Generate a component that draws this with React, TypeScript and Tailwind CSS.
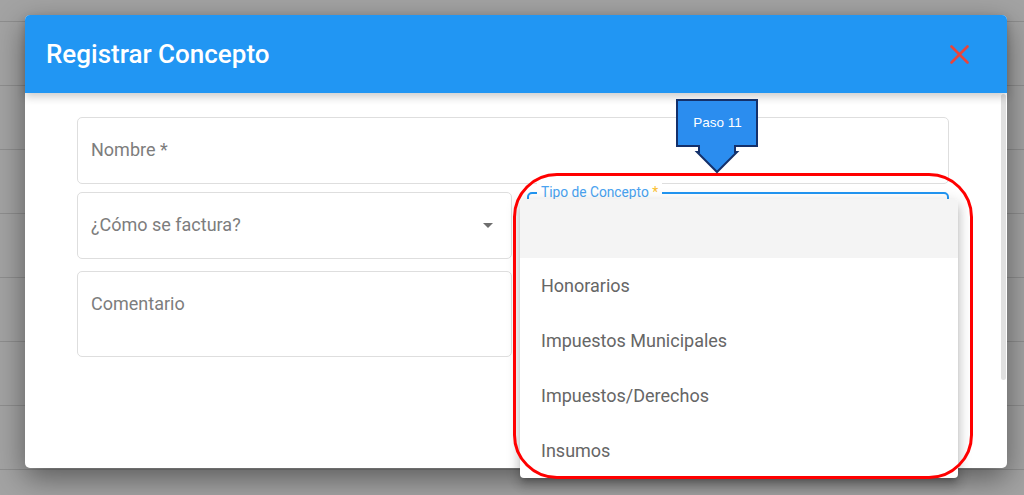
import React from "react";

const bgRows = [0, 1, 2, 3, 4, 5, 6, 7];
const options = ["Honorarios", "Impuestos Municipales", "Impuestos/Derechos", "Insumos"];

export default function App() {
  return (
    <div className="relative w-[1024px] h-[495px] overflow-hidden bg-[#a3a3a3] font-[Roboto,sans-serif]">
      {/* table rows behind the overlay */}
      <div className="flex flex-col">
        <div className="h-[22px] border-b border-[#8e8e8e]" />
        {bgRows.map((r) => (
          <div key={r} className="h-[64px] border-b border-[#8e8e8e]" />
        ))}
      </div>

      {/* modal */}
      <div className="absolute left-[25px] top-[15px] w-[982px] h-[453px] bg-white rounded-[5px] shadow-[0_10px_30px_rgba(0,0,0,0.45)] flex flex-col">
        <div className="relative z-10 h-[78px] shrink-0 bg-[#2196f3] rounded-t-[5px] flex items-center justify-between pl-[21px] pr-[38px] shadow-[0_4px_8px_rgba(0,0,0,0.2)]">
          <span className="text-white text-[26px] font-medium">Registrar Concepto</span>
          <svg width="19" height="19" viewBox="0 0 19 19">
            <line x1="1.5" y1="1.5" x2="17.5" y2="17.5" stroke="#e8453c" strokeWidth="2.6" strokeLinecap="round" />
            <line x1="17.5" y1="1.5" x2="1.5" y2="17.5" stroke="#e8453c" strokeWidth="2.6" strokeLinecap="round" />
          </svg>
        </div>

        <div className="relative flex-1 pl-[52px] pr-[58px] pt-[24px] flex flex-col">
          <div className="h-[67px] border border-[#dedede] rounded-[5px] pl-[13px] pt-[20px] text-[18px] leading-[24px] text-[#7d7d7d]">
            Nombre *
          </div>

          <div className="mt-[8px] flex gap-[15px]">
            <div className="w-[435px] h-[67px] border border-[#dedede] rounded-[5px] pl-[13px] pr-[18px] pt-[20px] flex justify-between text-[18px] leading-[24px] text-[#7d7d7d]">
              <span>¿Cómo se factura?</span>
              <svg width="10" height="5" viewBox="0 0 10 5" className="mt-[10px]">
                <path d="M0 0 L10 0 L5 5 Z" fill="#6e6e6e" />
              </svg>
            </div>
            <div className="relative flex-1 h-[67px] border-2 border-[#2196f3] rounded-[5px]">
              <span className="absolute left-[8px] top-[-11px] px-[4px] bg-white text-[13.75px] leading-[18px] text-[#4aa3f0] whitespace-nowrap">
                Tipo de Concepto<span className="text-[#fbc02d]"> *</span>
              </span>
              <div className="absolute left-[-9px] top-[5px] z-20 w-[438px] h-[279px] bg-white rounded-[4px] shadow-[0_5px_5px_-3px_rgba(0,0,0,0.2),0_8px_10px_1px_rgba(0,0,0,0.14),0_3px_14px_2px_rgba(0,0,0,0.12)] flex flex-col">
                <div className="h-[59px] bg-[#f4f4f4] rounded-t-[4px]" />
                {options.map((o) => (
                  <div key={o} className="h-[55px] flex items-center pl-[21px] text-[18px] text-[#666666]">
                    {o}
                  </div>
                ))}
              </div>
            </div>
          </div>

          <div className="mt-[12px] w-[435px] h-[86px] border border-[#dedede] rounded-[5px] pl-[13px] pt-[20px] text-[18px] leading-[24px] text-[#7d7d7d]">
            Comentario
          </div>
        </div>

        {/* scrollbar thumb */}
        <div className="absolute right-[1px] top-[79px] w-[5px] h-[286px] rounded-full bg-[#e0e0e0]" />
      </div>

      {/* red highlight */}
      <div className="absolute left-[513px] top-[173px] w-[460px] h-[306px] border-[3px] border-[#ff0000] rounded-[44px] z-30" />

      {/* step callout */}
      <div className="absolute left-[676px] top-[99px] z-40 w-[83px] h-[75px]">
        <svg width="83" height="75" viewBox="0 0 83 75" className="absolute left-0 top-0">
          <path
            d="M1 1 H81 V47 H59 V53 H61 L41 73 L21 53 H23 V47 H1 Z"
            fill="#2b8def"
            stroke="#14306a"
            strokeWidth="2"
            strokeLinejoin="miter"
          />
        </svg>
        <div className="relative w-[83px] h-[48px] flex items-center justify-center text-white text-[13.5px] font-['Liberation_Sans',sans-serif]">
          Paso 11
        </div>
      </div>
    </div>
  );
}
